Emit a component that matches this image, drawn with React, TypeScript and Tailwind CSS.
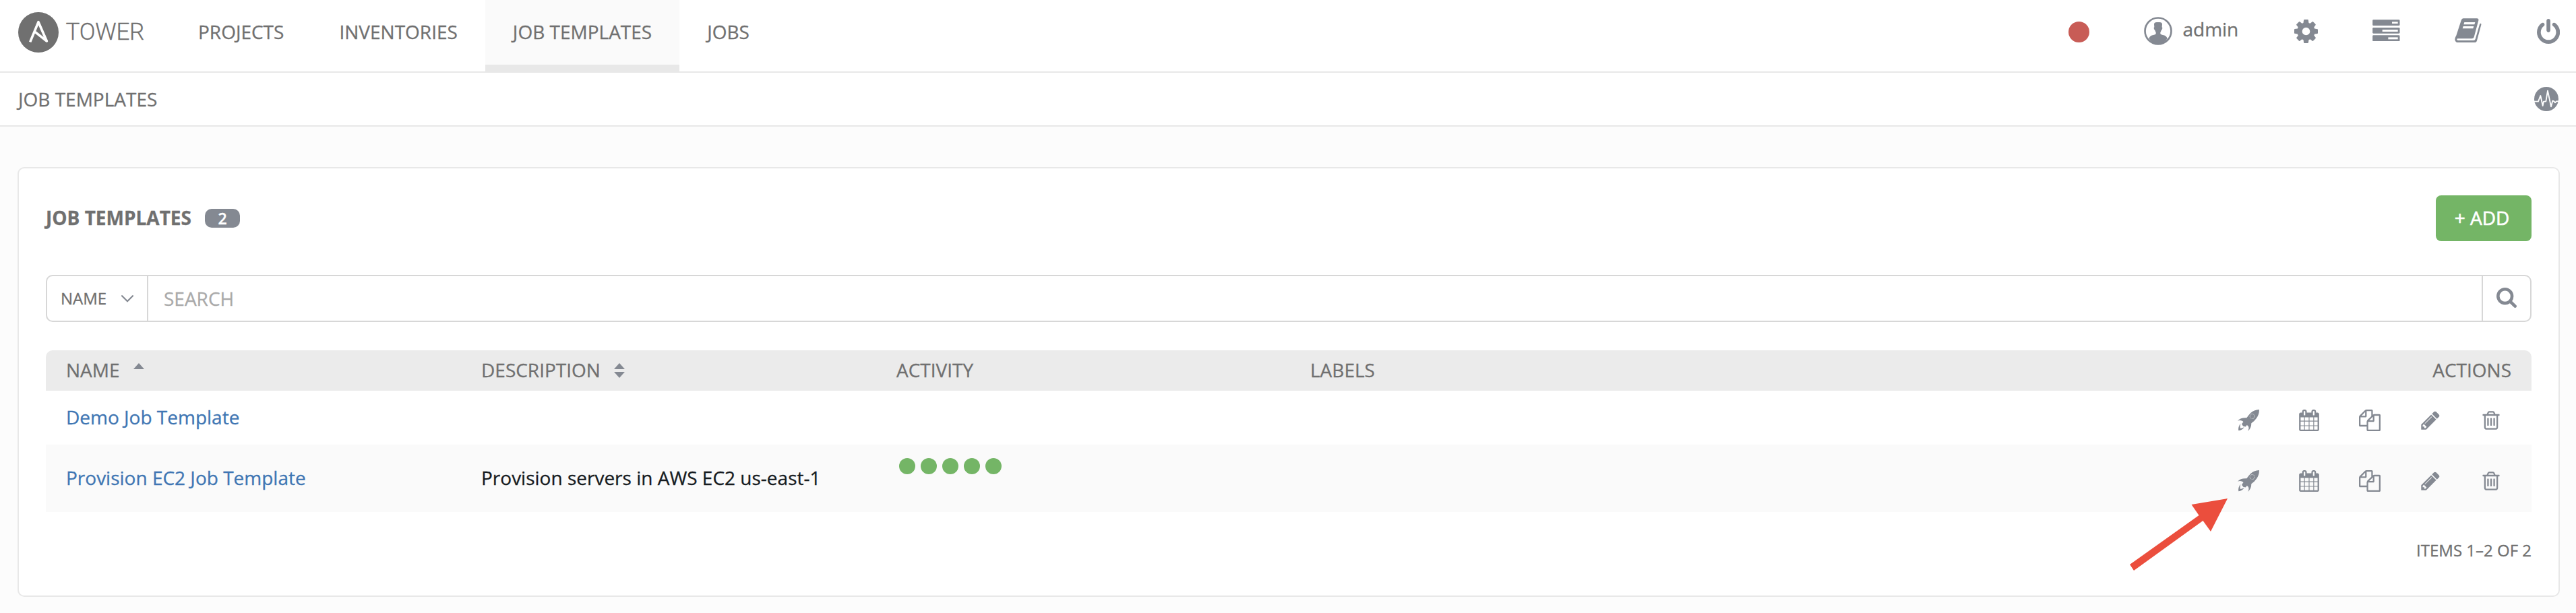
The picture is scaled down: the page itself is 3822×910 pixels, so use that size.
import React from "react";

type GlyphProps = { d: string; viewBox?: string; className: string };

function Glyph({ d, viewBox = "0 0 1792 1792", className }: GlyphProps) {
  return (
    <svg viewBox={viewBox} className={className} fill="currentColor">
      <path d={d} />
    </svg>
  );
}

const COG =
  "M1152 896q0-106-75-181t-181-75-181 75-75 181 75 181 181 75 181-75 75-181zm512-109v222q0 12-8 23t-20 13l-185 28q-19 54-39 91 35 50 107 138 10 12 10 25t-9 23q-27 37-99 108t-94 71q-12 0-26-9l-138-108q-44 23-91 38-16 136-29 186-7 28-36 28h-222q-14 0-24.5-8.5t-11.5-21.5l-28-184q-49-16-90-37l-141 107q-10 9-25 9-14 0-25-11-126-114-165-168-7-10-7-23 0-12 8-23 15-21 51-66.5t54-70.5q-27-50-41-99l-183-27q-13-2-21-12.5t-8-23.5v-222q0-12 8-23t19-13l186-28q14-46 39-92-40-57-107-138-10-12-10-24 0-10 9-23 26-36 98.5-107.5t94.5-71.5q13 0 26 10l138 107q44-23 91-38 16-136 29-186 7-28 36-28h222q14 0 24.5 8.5t11.5 21.5l28 184q49 16 90 37l142-107q9-9 24-9 13 0 25 10 129 119 165 170 7 8 7 22 0 12-8 23-15 21-51 66.5t-54 70.5q26 50 41 98l183 28q13 2 21 12.5t8 23.5z";
const POWER =
  "M1664 896q0 156-61 298t-164 245-245 164-298 61-298-61-245-164-164-245-61-298q0-182 80.5-343t226.5-270q43-32 95.5-25t83.5 50q32 42 24.5 94.5t-49.5 84.5q-98 74-151.5 181t-53.5 228q0 104 40.5 198.5t109.5 163.5 163.5 109.5 198.5 40.5 198.5-40.5 163.5-109.5 109.5-163.5 40.5-198.5q0-121-53.5-228t-151.5-181q-42-32-49.5-84.5t24.5-94.5q31-43 84-50t95 25q146 109 226.5 270t80.5 343zm-640-768v640q0 52-38 90t-90 38-90-38-38-90v-640q0-52 38-90t90-38 90 38 38 90z";
const SEARCH =
  "M1216 832q0-185-131.5-316.5t-316.5-131.5-316.5 131.5-131.5 316.5 131.5 316.5 316.5 131.5 316.5-131.5 131.5-316.5zm512 832q0 52-38 90t-90 38q-54 0-90-38l-343-342q-179 124-399 124-143 0-273.5-55.5t-225-150-150-225-55.5-273.5 55.5-273.5 150-225 225-150 273.5-55.5 273.5 55.5 225 150 150 225 55.5 273.5q0 220-124 399l343 343q37 37 37 90z";
const CALENDAR =
  "M128 1664h288v-288h-288v288zm352 0h320v-288h-320v288zm-352-352h288v-320h-288v320zm352 0h320v-320h-320v320zm-352-384h288v-288h-288v288zm736 736h320v-288h-320v288zm-384-736h320v-288h-320v288zm768 736h288v-288h-288v288zm-384-352h320v-320h-320v320zm-352-864v-288q0-13-9.5-22.5t-22.5-9.5h-64q-13 0-22.5 9.5t-9.5 22.5v288q0 13 9.5 22.5t22.5 9.5h64q13 0 22.5-9.5t9.5-22.5zm736 864h288v-320h-288v320zm-384-384h320v-288h-320v288zm384 0h288v-288h-288v288zm32-480v-288q0-13-9.5-22.5t-22.5-9.5h-64q-13 0-22.5 9.5t-9.5 22.5v288q0 13 9.5 22.5t22.5 9.5h64q13 0 22.5-9.5t9.5-22.5zm384-64v1280q0 52-38 90t-90 38h-1408q-52 0-90-38t-38-90v-1280q0-52 38-90t90-38h128v-96q0-66 47-113t113-47h64q66 0 113 47t47 113v96h384v-96q0-66 47-113t113-47h64q66 0 113 47t47 113v96h128q52 0 90 38t38 90z";
const COPY =
  "M1696 384q40 0 68 28t28 68v1216q0 40-28 68t-68 28h-960q-40 0-68-28t-28-68v-288h-544q-40 0-68-28t-28-68v-672q0-40 20-88t48-76l408-408q28-28 76-48t88-20h416q40 0 68 28t28 68v328q68-40 128-40h416zm-544 213l-299 299h299v-299zm-640-384l-299 299h299v-299zm196 647l316-316v-416h-384v416q0 40-28 68t-68 28h-416v640h512v-256q0-40 20-88t48-76zm956 804v-1152h-384v416q0 40-28 68t-68 28h-416v640h896z";
const PENCIL =
  "M491 1536l91-91-235-235-91 91v107h128v128h107zm523-928q0-22-22-22-10 0-17 7l-542 542q-7 7-7 17 0 22 22 22 10 0 17-7l542-542q7-7 7-17zm-54-192l416 416-832 832h-416v-416zm683 96q0 53-37 90l-166 166-416-416 166-165q36-38 90-38 53 0 91 38l235 234q37 39 37 91z";
const TRASH =
  "M704 736v576q0 14-9 23t-23 9h-64q-14 0-23-9t-9-23v-576q0-14 9-23t23-9h64q14 0 23 9t9 23zm256 0v576q0 14-9 23t-23 9h-64q-14 0-23-9t-9-23v-576q0-14 9-23t23-9h64q14 0 23 9t9 23zm256 0v576q0 14-9 23t-23 9h-64q-14 0-23-9t-9-23v-576q0-14 9-23t23-9h64q14 0 23 9t9 23zm128 724v-948h-896v948q0 22 7 40.5t14.5 27 10.5 8.5h832q3 0 10.5-8.5t14.5-27 7-40.5zm-672-1076h448l-48-117q-7-9-17-11h-317q-10 2-17 11zm928 32v64q0 14-9 23t-23 9h-96v948q0 83-47 143.5t-113 60.5h-832q-66 0-113-58.5t-47-141.5v-952h-96q-14 0-23-9t-9-23v-64q0-14 9-23t23-9h309l70-167q15-37 54-63t79-26h320q40 0 79 26t54 63l70 167h309q14 0 23 9t9 23z";

function Logo() {
  return (
    <svg viewBox="0 0 180 180" className="h-[60px] w-[60px]">
      <circle cx="90" cy="90" r="90" fill="#707070" />
      <path
        d="M53 133 L90 44 L127 129 L76 89"
        fill="none"
        stroke="#fff"
        strokeWidth="11"
        strokeLinejoin="round"
      />
    </svg>
  );
}

function UserIcon() {
  return (
    <svg viewBox="0 0 126 126" className="h-[42px] w-[42px]">
      <circle cx="63" cy="63" r="58.5" fill="none" stroke="#848992" strokeWidth="8" />
      <path
        fill="#848992"
        d="M45 33 Q45 24 57 24 H69 Q81 24 81 33 L80 46 Q84 48 81 55 Q79 58 77 60 Q76 65 73 69 V76 Q75 80 84 81 Q99 82 104 97 Q88 122 63 122 Q38 122 22 97 Q27 82 42 81 Q51 80 53 76 V69 Q50 65 49 60 Q47 58 45 55 Q42 48 46 46 Z"
      />
    </svg>
  );
}

function ServersIcon() {
  return (
    <svg viewBox="361 84 122 98" className="h-[32.7px] w-[40.7px]">
      <g fill="#848992">
        <rect x="361.500" y="85" width="121" height="26" rx="4" />
        <rect x="361.500" y="120" width="121" height="26" rx="4" />
        <rect x="361.500" y="154" width="121" height="27" rx="4" />
      </g>
      <g fill="#fff">
        <rect x="448" y="94" width="26" height="8" />
        <rect x="405" y="129" width="69" height="9" />
        <rect x="431" y="163" width="43" height="9" />
      </g>
    </svg>
  );
}

function BookIcon() {
  return (
    <svg viewBox="728 80 119 110" className="h-[36.7px] w-[39.7px]">
      <path
        fill="#848992"
        d="M766 81 H827 Q836 81 834 90 L814 164 Q812 171 804 171 H742 Q737 171 738 175 Q739 179 744 179 H812 Q818 179 820 173 L839 108 Q840 103 844 103 Q847 104 846 109 L827 180 Q825 188 816 189 H741 Q729 186 729 173 Q730 164 735 157 L757 90 Q760 81 766 81 Z"
      />
      <path fill="#fff" d="M771 98 H819 L816 108 H768 Z M766 116 H813 L810 126 H763 Z" />
    </svg>
  );
}

function ActivityIcon() {
  return (
    <svg viewBox="1080 385 108 108" className="h-9 w-9">
      <circle cx="1134" cy="439" r="54" fill="#848992" />
      <path
        d="M1080 450 H1098 L1108 424 L1118 469 L1122 450 H1132 L1140 402 L1155 473 L1162 447 L1168 449 L1173 455 L1179 449 H1188"
        fill="none"
        stroke="#fff"
        strokeWidth="5.5"
        strokeLinejoin="round"
      />
    </svg>
  );
}

function RocketIcon() {
  return (
    <svg viewBox="0 0 96 96" className="h-8 w-8">
      <path
        fill="#848992"
        d="M96 0 Q72 1 58 15 Q48 25 40 37 Q14 35 0 50 Q10 46 20 50 Q26 53 25 56 Q17 61 20 68 Q24 76 33 76 Q38 77 40 70 Q45 69 48 76 Q52 85 45 96 Q61 84 61 61 Q75 51 84 38 Q96 22 96 0 Z"
      />
      <path fill="#848992" d="M13 62 Q1 76 4 94 Q20 92 29 79 Q18 84 12 84 Q9 75 13 62 Z" />
      <circle cx="65" cy="30" r="10.500" fill="none" stroke="#fff" strokeWidth="1.800" strokeDasharray="5 2" />
    </svg>
  );
}

function Actions() {
  return (
    <div className="flex items-center gap-[58px] pr-[44px] pt-[10px] text-[#848992]">
      <RocketIcon />
      <Glyph d={CALENDAR} viewBox="0 0 1664 1792" className="h-8 w-8" />
      <Glyph d={COPY} className="h-8 w-8" />
      <Glyph d={PENCIL} className="h-8 w-8" />
      <Glyph d={TRASH} className="h-8 w-8" />
    </div>
  );
}

function NavItem({ label, active = false }: { label: string; active?: boolean }) {
  return (
    <a
      className={
        active
          ? "flex h-[108px] items-center border-b-[12px] border-[#e8e8e8] bg-[#fafafa] px-[41px] pb-[2px]"
          : "flex h-[106px] items-center px-[41px] pb-[12px]"
      }
    >
      {label}
    </a>
  );
}

const COLS = "grid grid-cols-[616px_616px_614px_1fr_auto] pb-[2px] pl-[30px]";

export default function App() {
  return (
    <div className="relative h-[910px] w-[3822px] overflow-hidden bg-[#fcfcfc] font-['Open_Sans',sans-serif] text-[28px] leading-[38px] text-[#707070] [-webkit-text-stroke:0.3px]">
      <header className="flex h-[108px] items-start bg-white pl-[26.500px] shadow-[inset_0_-2px_0_#e8e8e8]">
        <div className="flex h-[96px] w-[226.500px] items-center">
          <Logo />
          <span className="ml-[11px] font-['Roboto',sans-serif] text-[35px] font-light tracking-[-0.2px]">TOWER</span>
        </div>
        <nav className="flex">
          <NavItem label="PROJECTS" />
          <NavItem label="INVENTORIES" />
          <NavItem label="JOB TEMPLATES" active />
          <NavItem label="JOBS" />
        </nav>
        <div className="ml-auto flex h-[92px] items-center pr-[24px] text-[#848992]">
          <span className="mt-[2px] h-[31px] w-[31px] rounded-full bg-[#c85c56]" />
          <span className="ml-[81px] flex items-center">
            <UserIcon />
            <span className="ml-[15px] w-[84px] pb-[6px] text-[#707070]">admin</span>
          </span>
          <Glyph d={COG} viewBox="128 128 1536 1536" className="ml-[82px] h-[35px] w-[35px]" />
          <span className="ml-[81px] pb-[2px]"><ServersIcon /></span>
          <span className="ml-[81px] pb-[2px]"><BookIcon /></span>
          <Glyph d={POWER} viewBox="128 0 1536 1664" className="ml-[82px] h-[37px] w-[34.200px]" />
        </div>
      </header>

      <div className="flex h-[80px] items-center justify-between border-b-2 border-[#e8e8e8] bg-white pl-[27px] pr-[26px]">
        <span>JOB TEMPLATES</span>
        <ActivityIcon />
      </div>

      <main className="mx-[26px] mr-[24px] mt-[60px] h-[638px] rounded-[10px] border-2 border-[#e8e8e8] bg-white px-[40px] pt-[40px]">
        <div className="flex h-[68px] items-center">
          <h1 className="pb-[2px] font-bold">JOB TEMPLATES</h1>
          <span className="ml-[20px] flex h-[28px] w-[52px] items-center justify-center rounded-[10px] bg-[#848992] text-[23px] font-semibold leading-[28px] text-white">
            2
          </span>
          <button className="ml-auto h-[68px] w-[142px] rounded-[8px] bg-[#74b566] pb-[2px] pr-[5px] text-white [-webkit-text-stroke:0.6px]">
            + ADD
          </button>
        </div>

        <div className="mt-[50px] flex h-[70px] rounded-[10px] border-2 border-[#d7d7d7]">
          <div className="flex w-[150px] items-center border-r-2 border-[#d7d7d7] pl-[20px] text-[24px]">
            NAME
            <svg viewBox="0 0 18 11" className="ml-[22px] h-[11px] w-[18px]">
              <path d="M1 1.200 L9 9.200 L17 1.200" fill="none" stroke="#848992" strokeWidth="2.200" strokeLinecap="round" />
            </svg>
          </div>
          <div className="flex flex-1 items-center pl-[23px] text-[#aaaaaa]">SEARCH</div>
          <div className="flex w-[72px] items-center border-l-2 border-[#d7d7d7] pb-[2px] pl-[20px] text-[#848992]">
            <Glyph d={SEARCH} viewBox="64 128 1664 1664" className="h-[30px] w-[30px]" />
          </div>
        </div>

        <div className="mt-[42px]">
          <div className={`${COLS} h-[60px] items-center rounded-t-[10px] bg-[#ebebeb]`}>
            <span className="flex items-center">
              NAME
              <svg viewBox="0 0 16 22" className="ml-[20px] mt-[2px] h-[22px] w-4" fill="#848992">
                <path d="M8 0 L16 9 H0 Z" />
              </svg>
            </span>
            <span className="flex items-center">
              DESCRIPTION
              <svg viewBox="0 0 16 22" className="ml-[20px] mt-[2px] h-[22px] w-4" fill="#848992">
                <path d="M8 0 L16 9 H0 Z M8 22 L16 13 H0 Z" />
              </svg>
            </span>
            <span>ACTIVITY</span>
            <span>LABELS</span>
            <span className="pr-[30px]">ACTIONS</span>
          </div>

          <div className={`${COLS} h-[80px] items-center`}>
            <a className="text-[#3f76b3]">Demo Job Template</a>
            <span />
            <span />
            <span />
            <Actions />
          </div>

          <div className={`${COLS} h-[100px] items-center bg-[#fafafa]`}>
            <a className="text-[#3f76b3]">Provision EC2 Job Template</a>
            <span className="text-[#161b1f]">Provision servers in AWS EC2 us-east-1</span>
            <span className="flex gap-2 self-start pl-[4px] pt-5">
              {[0, 1, 2, 3, 4].map((i) => (
                <i key={i} className="h-6 w-6 rounded-full bg-[#74b566]" />
              ))}
            </span>
            <span />
            <Actions />
          </div>
        </div>

        <div className="mt-[38px] text-right text-[24px]">ITEMS 1–2 OF 2</div>
      </main>

      <svg viewBox="0 0 147 109" className="absolute left-[3159px] top-[739px] h-[109px] w-[147px]">
        <path fill="#eb4e3d" d="M146 1 L92.500 10 L103.500 26 L1 99 L7 108 L109.500 34 L121 50 Z" />
      </svg>
    </div>
  );
}
